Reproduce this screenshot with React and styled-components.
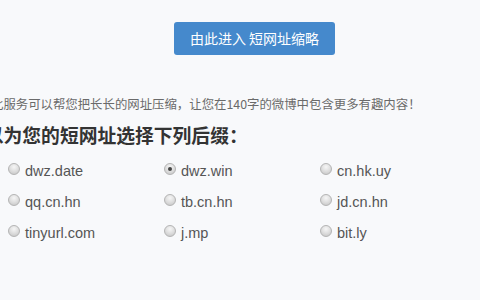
import React from "react";
import styled, { createGlobalStyle } from "styled-components";

const Global = createGlobalStyle`
  html, body { margin: 0; padding: 0; }
  body {
    width: 480px;
    height: 300px;
    overflow: hidden;
    background: #f8f9fb;
    font-family: "Liberation Sans", Arial, "Noto Sans CJK SC", sans-serif;
  }
`;

const Page = styled.div`
  width: 480px;
  height: 300px;
  overflow: hidden;
  display: flex;
  flex-direction: column;
`;

const ButtonBar = styled.div`
  display: flex;
  padding: 22px 0 0 174px;
`;

const EnterButton = styled.button`
  width: 161px;
  height: 33px;
  border: none;
  border-radius: 3px;
  background: #4589cc;
  color: #ffffff;
  font-family: "Noto Sans CJK SC", sans-serif;
  font-size: 14px;
  line-height: 33px;
  padding: 0;
  cursor: pointer;
`;

const Description = styled.p`
  margin: 41px 0 0 ${(p) => p.$shift}px;
  font-family: "Noto Sans CJK SC", sans-serif;
  font-size: 12.4px;
  line-height: 16px;
  color: #6a6a6a;
  white-space: nowrap;
`;

const Heading = styled.h3`
  margin: 11px 0 0 ${(p) => p.$shift}px;
  font-family: "Noto Sans CJK SC", serif;
  font-size: 18.8px;
  font-weight: 700;
  line-height: 24px;
  color: #333333;
  white-space: nowrap;
`;

const Grid = styled.div`
  display: grid;
  grid-template-columns: repeat(3, 156px);
  grid-auto-rows: 31px;
  padding: 8px 0 0 8px;
`;

const Option = styled.label`
  display: flex;
  align-items: center;
  gap: 5px;
  font-size: 14.5px;
  color: #555555;
  cursor: pointer;
`;

const Radio = styled.span`
  position: relative;
  flex: none;
  width: 12px;
  height: 12px;
  box-sizing: border-box;
  border-radius: 50%;
  border: 1px solid #b4b4b4;
  background: radial-gradient(circle at 50% 30%, #f6f6f6 0%, #dedede 50%, #c2c2c2 100%);
  margin-top: -3px;
  &::after {
    content: "";
    display: ${(p) => (p.$checked ? "block" : "none")};
    position: absolute;
    left: 3px;
    top: 3px;
    width: 4px;
    height: 4px;
    border-radius: 50%;
    background: #444;
  }
`;

const options = [
  { label: "dwz.date" },
  { label: "dwz.win", checked: true },
  { label: "cn.hk.uy" },
  { label: "qq.cn.hn" },
  { label: "tb.cn.hn" },
  { label: "jd.cn.hn" },
  { label: "tinyurl.com" },
  { label: "j.mp" },
  { label: "bit.ly" },
];

export default function App() {
  return (
    <Page>
      <Global />
      <ButtonBar>
        <EnterButton>由此进入 短网址缩略</EnterButton>
      </ButtonBar>
      <Description $shift={-9}>
        此服务可以帮您把长长的网址压缩，让您在140字的微博中包含更多有趣内容！
      </Description>
      <Heading $shift={-34}>可以为您的短网址选择下列后缀：</Heading>
      <Grid>
        {options.map((o) => (
          <Option key={o.label}>
            <Radio $checked={o.checked} />
            {o.label}
          </Option>
        ))}
      </Grid>
    </Page>
  );
}
